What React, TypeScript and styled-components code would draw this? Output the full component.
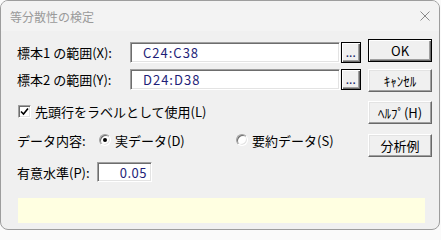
import React, { useState } from 'react';
import styled, { createGlobalStyle } from 'styled-components';

const GlobalStyle = createGlobalStyle`
  html, body {
    margin: 0;
    padding: 0;
    background: #fafafa;
  }
  body {
    font-family: "Noto Sans CJK JP", "Noto Sans", sans-serif;
    color: #000;
  }
  * {
    box-sizing: border-box;
  }
`;

const Window = styled.div`
  width: 440px;
  height: 230px;
  border: 1px solid #9d9d9d;
  border-radius: 8px;
  overflow: hidden;
  background: #f0f0f0;
  display: flex;
  flex-direction: column;
`;

const TitleBar = styled.div`
  height: 30px;
  flex: none;
  background: #f3f3f3;
  display: flex;
  align-items: center;
  justify-content: space-between;
  padding: 0 9px 0 9px;
  font-size: 12px;
  color: #9a9a9a;
`;

const CloseButton = styled.button`
  border: none;
  background: none;
  padding: 0;
  width: 10px;
  height: 10px;
  display: flex;
  cursor: default;
`;

const Body = styled.div`
  flex: 1;
  padding: 0 7px 0 16px;
  display: flex;
  flex-direction: column;
  font-size: 13px;
`;

const Main = styled.div`
  display: flex;
`;

const Form = styled.div`
  width: 345px;
  padding-top: 11px;
  display: flex;
  flex-direction: column;
`;

const Row = styled.div<{ $top?: number; $height: number }>`
  display: flex;
  align-items: center;
  height: ${p => p.$height}px;
  margin-top: ${p => p.$top ?? 0}px;
  line-height: 1;
  white-space: nowrap;
`;

const Label = styled.span<{ $width: number }>`
  width: ${p => p.$width}px;
  flex: none;
`;

const Sunken = styled.input<{ $width: number; $align?: 'left' | 'right' }>`
  width: ${p => p.$width}px;
  height: 100%;
  border: 1px solid;
  border-color: #a0a0a0 #ffffff #ffffff #a0a0a0;
  box-shadow: inset 1px 1px 0 #6d6d6d, inset -1px -1px 0 #e3e3e3;
  background: #fff;
  outline: none;
  font-family: "Noto Sans CJK JP", "Noto Sans", sans-serif;
  font-size: 13px;
  color: #1e1e78;
  letter-spacing: ${p => (p.$align === 'right' ? 0.5 : 1)}px;
  text-align: ${p => p.$align ?? 'left'};
  padding: 0 ${p => (p.$align === 'right' ? 4 : 0)}px 0 ${p => (p.$align === 'right' ? 0 : 12)}px;
`;

const BrowseButton = styled.button`
  width: 20px;
  height: 100%;
  margin-left: 1px;
  padding: 0 0 3px 0;
  border: 1px solid #000;
  background: #f0f0f0;
  box-shadow: inset 1px 1px 0 #ffffff, inset -1px -1px 0 #696969, inset -2px -2px 0 #a0a0a0;
  display: flex;
  align-items: flex-end;
  justify-content: center;
  font-family: "Liberation Sans", sans-serif;
  font-weight: bold;
  font-size: 10px;
  line-height: 1;
  color: #1c2a6a;
  letter-spacing: 0.5px;
  cursor: default;
`;

const ButtonColumn = styled.div`
  margin-left: 7px;
  padding-top: 8px;
  width: 64px;
  display: flex;
  flex-direction: column;
`;

const DialogButton = styled.button<{ $default?: boolean; $top: number }>`
  height: 23px;
  margin-top: ${p => p.$top}px;
  padding: 0;
  background: #f0f0f0;
  font-family: "Noto Sans CJK JP", "Noto Sans", sans-serif;
  font-size: 13px;
  color: #000;
  line-height: 1;
  cursor: default;
  border: 1px solid;
  border-color: ${p => (p.$default ? '#000' : '#ffffff #696969 #696969 #ffffff')};
  box-shadow: ${p =>
    p.$default
      ? 'inset 1px 1px 0 #ffffff, inset -1px -1px 0 #696969, inset -2px -2px 0 #a0a0a0'
      : 'inset -1px -1px 0 #a0a0a0, inset 1px 1px 0 #e3e3e3'};
`;

const CheckBox = styled.span`
  width: 13px;
  height: 13px;
  margin-left: 1px;
  margin-right: 4px;
  flex: none;
  border: 1px solid;
  border-color: #a0a0a0 #ffffff #ffffff #a0a0a0;
  box-shadow: inset 1px 1px 0 #6d6d6d, inset -1px -1px 0 #e3e3e3;
  background: #fff;
  display: flex;
  align-items: center;
  justify-content: center;
`;

const Option = styled.label<{ $width?: number }>`
  display: flex;
  align-items: center;
  width: ${p => (p.$width ? `${p.$width}px` : 'auto')};
  cursor: default;
`;

const Radio = styled.span<{ $checked: boolean }>`
  width: 12px;
  height: 12px;
  margin-right: 4px;
  flex: none;
  border-radius: 50%;
  border: 1px solid;
  border-color: #a0a0a0 #ffffff #ffffff #a0a0a0;
  box-shadow: inset 1px 1px 0 #6d6d6d, inset -1px -1px 0 #e3e3e3;
  background: #fff;
  position: relative;

  &::after {
    content: '';
    display: ${p => (p.$checked ? 'block' : 'none')};
    position: absolute;
    width: 4px;
    height: 4px;
    border-radius: 50%;
    background: #000;
    left: 3px;
    top: 3px;
  }
`;

const MessagePanel = styled.div`
  margin: 16px 7px 0 1px;
  height: 25px;
  background: #ffffe1;
`;

export default function App() {
  const [kind, setKind] = useState<'raw' | 'summary'>('raw');

  return (
    <>
      <GlobalStyle />
      <Window>
        <TitleBar>
          <span>等分散性の検定</span>
          <CloseButton aria-label="閉じる">
            <svg width="10" height="10" viewBox="0 0 10 10">
              <path d="M0.5 0.5 L9.5 9.5 M9.5 0.5 L0.5 9.5" stroke="#8a8a8a" strokeWidth="1" fill="none" />
            </svg>
          </CloseButton>
        </TitleBar>
        <Body>
          <Main>
            <Form>
              <Row $height={21}>
                <Label $width={113}>標本1 の範囲(X):</Label>
                <Sunken $width={210} defaultValue="C24:C38" />
                <BrowseButton>...</BrowseButton>
              </Row>
              <Row $height={21} $top={6}>
                <Label $width={113}>標本2 の範囲(Y):</Label>
                <Sunken $width={210} defaultValue="D24:D38" />
                <BrowseButton>...</BrowseButton>
              </Row>
              <Row $height={13} $top={15}>
                <CheckBox>
                  <svg width="9" height="9" viewBox="0 0 9 9">
                    <path d="M1 4.5 L3.5 7 L8 1.5" stroke="#000" strokeWidth="1.6" fill="none" />
                  </svg>
                </CheckBox>
                <span>先頭行をラベルとして使用(L)</span>
              </Row>
              <Row $height={14} $top={15}>
                <Label $width={82}>データ内容:</Label>
                <Option $width={137} onClick={() => setKind('raw')}>
                  <Radio $checked={kind === 'raw'} />
                  実データ(D)
                </Option>
                <Option onClick={() => setKind('summary')}>
                  <Radio $checked={kind === 'summary'} />
                  要約データ(S)
                </Option>
              </Row>
              <Row $height={20} $top={15}>
                <Label $width={80}>有意水準(P):</Label>
                <Sunken $width={55} $align="right" defaultValue="0.05" />
              </Row>
            </Form>
            <ButtonColumn>
              <DialogButton $default $top={0}>OK</DialogButton>
              <DialogButton $top={7}>ｷｬﾝｾﾙ</DialogButton>
              <DialogButton $top={9}>ﾍﾙﾌﾟ(H)</DialogButton>
              <DialogButton $top={10}>分析例</DialogButton>
            </ButtonColumn>
          </Main>
          <MessagePanel />
        </Body>
      </Window>
    </>
  );
}
